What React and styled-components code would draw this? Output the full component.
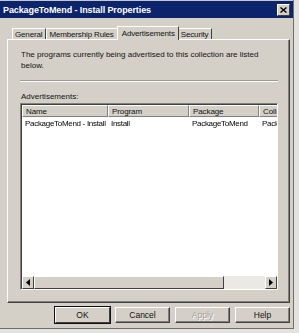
import styled, { createGlobalStyle } from "styled-components";

const Global = createGlobalStyle`
  html, body {
    margin: 0;
    padding: 0;
    background: #e4e2de;
  }
  * { box-sizing: border-box; }
`;

const Window = styled.div`
  width: 294px;
  height: 329px;
  background: #d4d0c8;
  border-right: 1px solid #6e6e6e;
  border-bottom: 1px solid #6e6e6e;
  display: flex;
  flex-direction: column;
  font-family: "Liberation Sans", Arial, sans-serif;
  font-size: 8px;
  color: #111;
`;

const TitleBar = styled.div`
  height: 18px;
  background: #0c246b;
  border-top: 1px solid #c8c8c8;
  display: flex;
  align-items: center;
  justify-content: space-between;
  padding: 0 3px 0 3px;
`;

const Title = styled.span`
  color: #fff;
  font-weight: bold;
  font-size: 9px;
  letter-spacing: -0.1px;
`;

const CloseBtn = styled.div`
  width: 13px;
  height: 12px;
  background: #d4d0c8;
  border: 1px solid;
  border-color: #fff #404040 #404040 #fff;
  display: flex;
  align-items: center;
  justify-content: center;
`;

const Body = styled.div`
  flex: 1;
  display: flex;
  flex-direction: column;
  padding: 7px 4px 0 7px;
`;

const TabStrip = styled.div`
  display: flex;
  align-items: flex-end;
  padding-left: 5px;
  height: 14px;
`;

const Tab = styled.div`
  height: ${(p) => (p.$active ? "14px" : "11px")};
  margin: ${(p) => (p.$active ? "0 -1px -1px -1px" : "0")};
  padding: ${(p) => (p.$active ? "0 3px 0 4px" : "0 3px 0 2px")};
  background: #d4d0c8;
  border-top: 1px solid #fff;
  border-left: 1px solid #fff;
  border-right: 1px solid #404040;
  display: flex;
  align-items: center;
  position: relative;
  z-index: ${(p) => (p.$active ? 1 : 0)};
  white-space: nowrap;
  font-size: 8px;
  letter-spacing: -0.15px;
`;

const Panel = styled.div`
  width: 283px;
  height: 264px;
  border: 1px solid;
  border-color: #fff #404040 #404040 #fff;
  box-shadow: inset -1px -1px 0 #808080;
  display: flex;
  flex-direction: column;
  padding: 9px 11px 12px 12px;
`;

const Intro = styled.p`
  margin: 0 0 0 1px;
  line-height: 11px;
  padding-right: 10px;
`;

const Divider = styled.div`
  margin: 9px 0 0 0;
  height: 2px;
  border-top: 1px solid #9a9a9a;
  border-bottom: 1px solid #fff;
`;

const Label = styled.div`
  margin: 10px 0 2px 1px;
`;

const ListBox = styled.div`
  flex: 1;
  background: #fff;
  border: 1px solid;
  border-color: #808080 #fff #fff #808080;
  box-shadow: inset 1px 1px 0 #404040;
  display: flex;
  flex-direction: column;
  overflow: hidden;
  padding: 1px 0 0 1px;
`;

const Header = styled.div`
  display: flex;
  height: 12px;
  flex-shrink: 0;
`;

const HeadCell = styled.div`
  width: ${(p) => p.$w}px;
  flex-shrink: 0;
  background: #d4d0c8;
  border-right: 1px solid #808080;
  border-bottom: 1px solid #808080;
  border-left: 1px solid #fff;
  border-top: 1px solid #fff;
  padding-left: 3px;
  display: flex;
  align-items: center;
  white-space: nowrap;
  overflow: hidden;
  letter-spacing: -0.1px;
`;

const Rows = styled.div`
  flex: 1;
  filter: grayscale(1);
`;

const Row = styled.div`
  display: flex;
  height: 13px;
  align-items: center;
`;

const Cell = styled.div`
  width: ${(p) => p.$w}px;
  flex-shrink: 0;
  padding-left: 3px;
  white-space: nowrap;
  color: #000;
  letter-spacing: -0.3px;
`;

const ScrollBar = styled.div`
  height: 13px;
  display: flex;
  flex-shrink: 0;
  background: #ebe9e4;
`;

const ArrowBtn = styled.div`
  width: 12px;
  height: 13px;
  background: #d4d0c8;
  border: 1px solid;
  border-color: #fff #404040 #404040 #fff;
  display: flex;
  align-items: center;
  justify-content: center;
`;

const Thumb = styled.div`
  width: 190px;
  height: 13px;
  background: #d4d0c8;
  border: 1px solid;
  border-color: #fff #404040 #404040 #fff;
`;

const Track = styled.div`
  flex: 1;
`;

const Buttons = styled.div`
  display: flex;
  justify-content: flex-end;
  gap: 5px;
  padding: 4px 0 0 0;
  width: 283px;
`;

const Button = styled.div`
  width: 55px;
  height: 16px;
  display: flex;
  align-items: center;
  justify-content: center;
  background: #d4d0c8;
  border: 1px solid;
  border-color: #fff #404040 #404040 #fff;
  box-shadow: ${(p) => (p.$default ? "0 0 0 1px #111" : "inset -1px -1px 0 #808080")};
  color: ${(p) => (p.$disabled ? "#a09d98" : "#111")};
  text-shadow: ${(p) => (p.$disabled ? "1px 1px 0 #fff" : "none")};
  font-size: 8.5px;
`;

const Tri = ({ dir }) => (
  <svg width="4" height="7" viewBox="0 0 4 7">
    {dir === "left" ? <path d="M4 0 L0 3.5 L4 7 Z" fill="#000" /> : <path d="M0 0 L4 3.5 L0 7 Z" fill="#000" />}
  </svg>
);

const cols = [
  { w: 86, name: "Name", val: "PackageToMend - Install" },
  { w: 81, name: "Program", val: "Install" },
  { w: 70, name: "Package", val: "PackageToMend" },
  { w: 40, name: "Collection", val: "PackageToMend" },
];

export default function App() {
  return (
    <>
      <Global />
      <Window>
        <TitleBar>
          <Title>PackageToMend - Install Properties</Title>
          <CloseBtn>
            <svg width="7" height="6" viewBox="0 0 7 6">
              <path d="M0.5 0.5 L6.5 5.5 M6.5 0.5 L0.5 5.5" stroke="#000" strokeWidth="1.4" />
            </svg>
          </CloseBtn>
        </TitleBar>
        <Body>
          <TabStrip>
            <Tab>General</Tab>
            <Tab>Membership Rules</Tab>
            <Tab $active>Advertisements</Tab>
            <Tab>Security</Tab>
          </TabStrip>
          <Panel>
            <Intro>The programs currently being advertised to this collection are listed below.</Intro>
            <Divider />
            <Label>Advertisements:</Label>
            <ListBox>
              <Header>
                {cols.map((c) => (
                  <HeadCell key={c.name} $w={c.w}>{c.name}</HeadCell>
                ))}
              </Header>
              <Rows>
                <Row>
                  {cols.map((c) => (
                    <Cell key={c.name} $w={c.w}>{c.val}</Cell>
                  ))}
                </Row>
              </Rows>
              <ScrollBar>
                <ArrowBtn><Tri dir="left" /></ArrowBtn>
                <Thumb />
                <Track />
                <ArrowBtn><Tri dir="right" /></ArrowBtn>
              </ScrollBar>
            </ListBox>
          </Panel>
          <Buttons>
            <Button $default>OK</Button>
            <Button>Cancel</Button>
            <Button $disabled>Apply</Button>
            <Button>Help</Button>
          </Buttons>
        </Body>
      </Window>
    </>
  );
}
